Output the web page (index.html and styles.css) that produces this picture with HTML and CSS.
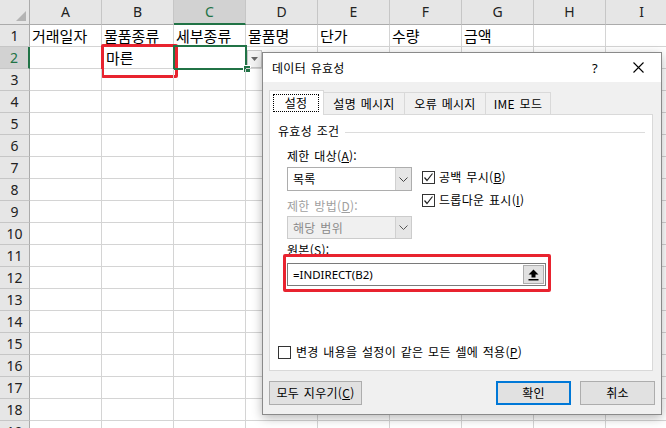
FILE: index.html
```html
<!DOCTYPE html>
<html lang="ko">
<head>
<meta charset="utf-8">
<title>데이터 유효성</title>
<link rel="stylesheet" href="styles.css">
</head>
<body>
<div class="sheet">
  <div class="corner"><svg width="30" height="25" viewBox="0 0 30 25"><polygon points="26,11 26,21 16,21" fill="#b4b4b4"/></svg></div>
  <div class="ch">A</div><div class="ch">B</div><div class="ch sel">C</div><div class="ch">D</div><div class="ch">E</div><div class="ch">F</div><div class="ch">G</div><div class="ch">H</div><div class="ch">I</div>

  <div class="rh">1</div><div class="c">거래일자</div><div class="c">물품종류</div><div class="c">세부종류</div><div class="c">물품명</div><div class="c">단가</div><div class="c">수량</div><div class="c">금액</div><div class="c"></div><div class="c"></div>
  <div class="rh sel">2</div><div class="c"></div><div class="c mark">마른</div><div class="c active"><span class="dd"><svg width="7" height="4" viewBox="0 0 7 4"><polygon points="0,0 7,0 3.5,4" fill="#666"/></svg></span></div><div class="c"></div><div class="c"></div><div class="c"></div><div class="c"></div><div class="c"></div><div class="c"></div>
  <div class="rh">3</div><div class="c"></div><div class="c"></div><div class="c"></div><div class="c"></div><div class="c"></div><div class="c"></div><div class="c"></div><div class="c"></div><div class="c"></div>
  <div class="rh">4</div><div class="c"></div><div class="c"></div><div class="c"></div><div class="c"></div><div class="c"></div><div class="c"></div><div class="c"></div><div class="c"></div><div class="c"></div>
  <div class="rh">5</div><div class="c"></div><div class="c"></div><div class="c"></div><div class="c"></div><div class="c"></div><div class="c"></div><div class="c"></div><div class="c"></div><div class="c"></div>
  <div class="rh">6</div><div class="c"></div><div class="c"></div><div class="c"></div><div class="c"></div><div class="c"></div><div class="c"></div><div class="c"></div><div class="c"></div><div class="c"></div>
  <div class="rh">7</div><div class="c"></div><div class="c"></div><div class="c"></div><div class="c"></div><div class="c"></div><div class="c"></div><div class="c"></div><div class="c"></div><div class="c"></div>
  <div class="rh">8</div><div class="c"></div><div class="c"></div><div class="c"></div><div class="c"></div><div class="c"></div><div class="c"></div><div class="c"></div><div class="c"></div><div class="c"></div>
  <div class="rh">9</div><div class="c"></div><div class="c"></div><div class="c"></div><div class="c"></div><div class="c"></div><div class="c"></div><div class="c"></div><div class="c"></div><div class="c"></div>
  <div class="rh">10</div><div class="c"></div><div class="c"></div><div class="c"></div><div class="c"></div><div class="c"></div><div class="c"></div><div class="c"></div><div class="c"></div><div class="c"></div>
  <div class="rh">11</div><div class="c"></div><div class="c"></div><div class="c"></div><div class="c"></div><div class="c"></div><div class="c"></div><div class="c"></div><div class="c"></div><div class="c"></div>
  <div class="rh">12</div><div class="c"></div><div class="c"></div><div class="c"></div><div class="c"></div><div class="c"></div><div class="c"></div><div class="c"></div><div class="c"></div><div class="c"></div>
  <div class="rh">13</div><div class="c"></div><div class="c"></div><div class="c"></div><div class="c"></div><div class="c"></div><div class="c"></div><div class="c"></div><div class="c"></div><div class="c"></div>
  <div class="rh">14</div><div class="c"></div><div class="c"></div><div class="c"></div><div class="c"></div><div class="c"></div><div class="c"></div><div class="c"></div><div class="c"></div><div class="c"></div>
  <div class="rh">15</div><div class="c"></div><div class="c"></div><div class="c"></div><div class="c"></div><div class="c"></div><div class="c"></div><div class="c"></div><div class="c"></div><div class="c"></div>
  <div class="rh">16</div><div class="c"></div><div class="c"></div><div class="c"></div><div class="c"></div><div class="c"></div><div class="c"></div><div class="c"></div><div class="c"></div><div class="c"></div>
  <div class="rh">17</div><div class="c"></div><div class="c"></div><div class="c"></div><div class="c"></div><div class="c"></div><div class="c"></div><div class="c"></div><div class="c"></div><div class="c"></div>
  <div class="rh">18</div><div class="c"></div><div class="c"></div><div class="c"></div><div class="c"></div><div class="c"></div><div class="c"></div><div class="c"></div><div class="c"></div><div class="c"></div>
  <div class="rh">19</div><div class="c"></div><div class="c"></div><div class="c"></div><div class="c"></div><div class="c"></div><div class="c"></div><div class="c"></div><div class="c"></div><div class="c"></div>
</div>

<div class="dialog">
  <div class="titlebar">
    <span class="title">데이터 유효성</span>
    <span class="help">?</span>
    <svg class="close" width="11" height="11" viewBox="0 0 11 11"><path d="M0.5 0.5 L10.5 10.5 M10.5 0.5 L0.5 10.5" stroke="#000" stroke-width="1.1" fill="none"/></svg>
  </div>
  <div class="dbody">
    <div class="tabs">
      <div class="tab active"><span class="focus">설정</span></div>
      <div class="tab w81">설명 메시지</div>
      <div class="tab w81">오류 메시지</div>
      <div class="tab w65">IME 모드</div>
    </div>
    <div class="panel">
      <div class="legend"><span>유효성 조건</span><span class="rule"></span></div>
      <div class="group">
        <div class="lbl">제한 대상(<u>A</u>):</div>
        <div class="split">
          <div class="leftcol">
            <div class="combo"><span class="val">목록</span><span class="cbtn"><svg width="9" height="5" viewBox="0 0 9 5"><polyline points="0.5,0.5 4.5,4.5 8.5,0.5" fill="none" stroke="#444" stroke-width="1"/></svg></span></div>
            <div class="lbl dis">제한 방법(<u>D</u>):</div>
            <div class="combo disabled"><span class="val">해당 범위</span><span class="cbtn"><svg width="9" height="5" viewBox="0 0 9 5"><polyline points="0.5,0.5 4.5,4.5 8.5,0.5" fill="none" stroke="#555" stroke-width="1"/></svg></span></div>
          </div>
          <div class="checks">
            <div class="chk first"><span class="box"><svg width="11" height="11" viewBox="0 0 11 11"><polyline points="1.5,5.5 4,8.5 9.5,1.5" fill="none" stroke="#222" stroke-width="1.2"/></svg></span>공백 무시(<u>B</u>)</div>
            <div class="chk second"><span class="box"><svg width="11" height="11" viewBox="0 0 11 11"><polyline points="1.5,5.5 4,8.5 9.5,1.5" fill="none" stroke="#222" stroke-width="1.2"/></svg></span>드롭다운 표시(<u>I</u>)</div>
          </div>
        </div>
        <div class="lbl src">원본(<u>S</u>):</div>
        <div class="source"><span class="formula">=INDIRECT(B2)</span><span class="pick"><svg width="11" height="12" viewBox="0 0 11 12"><polygon points="5.5,0.5 10.5,5.5 7.5,5.5 7.5,8.5 3.5,8.5 3.5,5.5 0.5,5.5" fill="#000"/><rect x="0.5" y="10" width="10" height="1.5" fill="#000"/></svg></span></div>
      </div>
      <div class="chk apply"><span class="box"></span>변경 내용을 설정이 같은 모든 셀에 적용(<u>P</u>)</div>
      <div class="highlight"></div>
    </div>
    <div class="actions">
      <button class="btn clear">모두 지우기(<u>C</u>)</button>
      <span class="spacer"></span>
      <button class="btn ok">확인</button>
      <button class="btn cancel">취소</button>
    </div>
  </div>
</div>
</body>
</html>
```

FILE: styles.css
```css
* { box-sizing: border-box; }
html, body {
  margin: 0;
  padding: 0;
  width: 666px;
  height: 428px;
  overflow: hidden;
  background: #fff;
}
body {
  position: relative;
  font-family: "Noto Sans CJK KR", "Noto Sans", sans-serif;
  color: #000;
}

/* ---------- spreadsheet ---------- */
.sheet {
  display: grid;
  grid-template-columns: 30px repeat(9, 72px);
  grid-template-rows: 25px;
  grid-auto-rows: 22px;
  width: 678px;
}
.corner {
  background: #e6e6e6;
  border-right: 1px solid #ababab;
  border-bottom: 1px solid #ababab;
  position: relative;
}
.corner svg { display: block; }
.ch {
  background: #e6e6e6;
  border-right: 1px solid #c6c6c6;
  border-bottom: 1px solid #ababab;
  text-align: center;
  font-family: "Noto Sans", sans-serif;
  font-size: 14px;
  line-height: 24px;
  color: #222;
}
.ch.sel {
  background: #d2d2d2;
  color: #217346;
  border-bottom: 2px solid #217346;
}
.rh {
  background: #e6e6e6;
  border-right: 1px solid #ababab;
  border-bottom: 1px solid #c6c6c6;
  text-align: center;
  font-family: "Noto Sans", sans-serif;
  font-size: 14px;
  line-height: 22px;
  color: #222;
}
.rh.sel {
  background: #d2d2d2;
  color: #217346;
  border-right: 2px solid #217346;
}
.c {
  border-right: 1px solid #d4d4d4;
  border-bottom: 1px solid #d4d4d4;
  font-size: 15px;
  line-height: 22px;
  padding-left: 2px;
  white-space: nowrap;
  position: relative;
}
.c.mark { padding-left: 4px; }
.c.mark::after {
  content: "";
  position: absolute;
  left: -1px;
  top: -3px;
  width: 71px;
  height: 28px;
  border: 3px solid #e8232f;
  border-radius: 2px;
}
.c.active::before {
  content: "";
  position: absolute;
  left: -1px;
  top: -2px;
  right: -2px;
  bottom: -2px;
  border: 2px solid #217346;
}
.c.active::after {
  content: "";
  position: absolute;
  left: 69px;
  top: 18px;
  width: 6px;
  height: 6px;
  background: #217346;
  border: 1px solid #fff;
}
.dd {
  position: absolute;
  left: 73px;
  top: 3px;
  width: 15px;
  height: 18px;
  background: #f3f3f3;
  border: 1px solid #c6c6c6;
  display: flex;
  align-items: center;
  justify-content: center;
}
.dd svg { display: block; }

/* ---------- dialog ---------- */
.dialog {
  position: absolute;
  left: 262px;
  top: 52px;
  width: 400px;
  height: 363px;
  background: #f0f0f0;
  border: 1px solid #8a8a8a;
  box-shadow: 0 3px 10px rgba(0, 0, 0, 0.28);
  font-size: 12px;
  line-height: 16px;
  letter-spacing: 0.3px;
  word-spacing: 1px;
}
.titlebar {
  height: 29px;
  background: #fff;
  display: flex;
  align-items: center;
  padding-left: 9px;
  padding-right: 17px;
}
.title { font-size: 12px; }
.help {
  margin-left: auto;
  font-family: "Noto Sans", sans-serif;
  font-size: 13px;
  margin-right: 35px;
}
.close { display: block; }

.dbody {
  padding: 8px 8px 0 6px;
}
.tabs {
  display: flex;
  align-items: flex-end;
  height: 24px;
}
.tab {
  height: 22px;
  border: 1px solid #d9d9d9;
  border-bottom: none;
  border-left: none;
  background: #f0f0f0;
  text-align: center;
  line-height: 21px;
  white-space: nowrap;
}
.tab.w81 { width: 81px; }
.tab.w65 { width: 65px; }
.tab.active {
  width: 55px;
  height: 25px;
  margin-bottom: -1px;
  background: #fff;
  border-left: 1px solid #d9d9d9;
  position: relative;
  z-index: 1;
  padding: 3px 4px 0 3px;
}
.focus {
  display: block;
  border: 1px dotted #000;
  height: 18px;
  line-height: 16px;
}
.panel {
  position: relative;
  height: 257px;
  background: #fff;
  border: 1px solid #d9d9d9;
}
.legend {
  display: flex;
  align-items: center;
  margin-top: 8px;
  padding-left: 8px;
  padding-right: 7px;
  height: 16px;
}
.rule {
  flex: 1;
  height: 1px;
  background: #dcdcdc;
  margin-left: 6px;
  margin-top: 2px;
}
.group { padding-left: 17px; }
.lbl { height: 16px; margin-top: 9px; white-space: nowrap; }
.lbl.dis { color: #a0a0a0; margin-top: 7px; }
.lbl.src { margin-top: 3px; }
.split {
  display: flex;
  margin-top: 3px;
}
.leftcol { width: 125px; }
.combo {
  height: 24px;
  border: 1px solid #adadad;
  background: #fff;
  display: flex;
}
.combo .val {
  flex: 1;
  padding-left: 5px;
  line-height: 22px;
}
.cbtn {
  width: 16px;
  background: #e6e6e6;
  border-left: 1px solid #d0d0d0;
  display: flex;
  align-items: center;
  justify-content: center;
}
.cbtn svg { display: block; }
.combo.disabled {
  height: 23px;
  margin-top: 2px;
  background: #f0f0f0;
  border-color: #cccccc;
  color: #8a8a8a;
}
.combo.disabled .val { line-height: 21px; }
.checks { margin-left: 10px; }
.chk {
  display: flex;
  align-items: center;
  height: 16px;
  white-space: nowrap;
}
.chk.first { margin-top: 2px; }
.chk.second { margin-top: 7px; }
.box {
  width: 13px;
  height: 13px;
  border: 1px solid #333;
  background: #fff;
  margin-right: 4px;
  display: flex;
  align-items: center;
  justify-content: center;
}
.box svg { display: block; }
.source {
  margin-top: 5px;
  width: 259px;
  height: 23px;
  border: 1px solid #7a7a7a;
  background: #fff;
  display: flex;
  align-items: center;
  padding: 1px;
}
.formula {
  flex: 1;
  padding-left: 4px;
  font-family: "Noto Sans", sans-serif;
  font-size: 11.5px;
  letter-spacing: 0;
}
.pick {
  width: 21px;
  height: 19px;
  background: #e1e1e1;
  border: 1px solid #adadad;
  display: flex;
  align-items: center;
  justify-content: center;
}
.pick svg { display: block; }
.chk.apply {
  margin-top: 58px;
  margin-left: 8px;
}
.chk.apply .box { margin-right: 5px; }
.highlight {
  position: absolute;
  left: 13px;
  top: 139px;
  width: 268px;
  height: 38px;
  border: 3px solid #e8232f;
  border-radius: 2px;
}
.actions {
  display: flex;
  margin-top: 10px;
  margin-right: -2px;
}
.spacer { flex: 1; }
.btn {
  height: 24px;
  background: #e1e1e1;
  border: 1px solid #adadad;
  font-family: "Noto Sans CJK KR", "Noto Sans", sans-serif;
  font-size: 12px;
  line-height: 16px;
  letter-spacing: 0.3px;
  word-spacing: 1px;
  color: #000;
  padding: 0;
}
.btn.clear { width: 93px; }
.btn.ok {
  width: 75px;
  border: 2px solid #0078d7;
  margin-right: 9px;
}
.btn.cancel { width: 75px; }
```
